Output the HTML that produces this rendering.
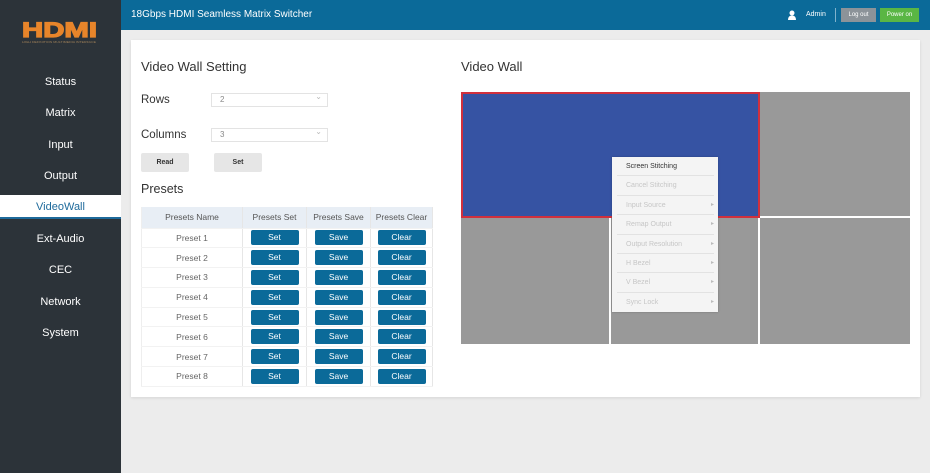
<!DOCTYPE html>
<html><head><meta charset="utf-8"><style>
*{margin:0;padding:0;box-sizing:border-box}
body{width:930px;height:473px;overflow:hidden;background:#ececec;font-family:"Liberation Sans",sans-serif;position:relative}
.abs{position:absolute}
#side{left:0;top:0;width:121px;height:473px;background:#2c3339}
.nav{position:absolute;left:0;width:121px;text-align:center;color:#fff;font-size:11px}
#hdr{left:121px;top:0;width:809px;height:30px;background:#0b6a99}
.card{left:131px;top:40px;width:789px;height:357px;background:#fff;box-shadow:0 1px 3px rgba(0,0,0,.1)}
.lbl{font-size:11.5px;color:#333}
.sel{width:117px;height:14px;border:1px solid #e3e3e3;font-size:8px;color:#888;padding:1px 8px;background:#fff}
.sel:after{content:"⌄";position:absolute;right:5px;top:-2px;color:#bbb;font-size:8px}
.gbtn{background:#e6e6e6;font-size:7px;font-weight:bold;color:#333;text-align:center;border-radius:2px}
table{border-collapse:collapse;font-size:8.5px;color:#666}
td,th{border-right:1px solid #e6e6e6;text-align:center;height:19.8px;padding:0;border-bottom:1px solid #f2f2f2}
th{background:#e8eef5;font-weight:normal;color:#555;height:21px}
.b{display:inline-block;width:48px;height:15px;line-height:15px;background:#0b6a99;color:#fff;border-radius:2px;font-size:8.5px;vertical-align:middle}
.mi{height:19.4px;line-height:19px;border-bottom:1px solid #e2e2e2;margin:0 4px 0 5px;padding-left:9px;font-size:7px;color:#c6c6c6;position:relative}
.mi.a:after{content:"▸";position:absolute;right:0;color:#bbb;font-size:6px}
</style></head><body>
<div id="side" class="abs">
 <svg class="abs" style="left:20px;top:18px" width="82" height="28" viewBox="0 0 82 28">
  <text x="2" y="19" textLength="75" lengthAdjust="spacingAndGlyphs" font-family="Liberation Sans" font-weight="bold" font-size="21" fill="#e8852a" stroke="#e8852a" stroke-width="1.2">HDMI</text>
  <text x="2" y="25" textLength="74" lengthAdjust="spacingAndGlyphs" font-family="Liberation Sans" font-size="3" fill="#a08058">HIGH DEFINITION MULTIMEDIA INTERFACE</text>
 </svg>
 <div class="nav" style="top:76px">Status</div>
 <div class="nav" style="top:107px">Matrix</div>
 <div class="nav" style="top:139px">Input</div>
 <div class="nav" style="top:170px">Output</div>
 <div class="nav" style="top:195px;height:24px;line-height:24px;background:#fff;color:#1e6a9b;border-bottom:2px solid #1e6a9b">VideoWall</div>
 <div class="nav" style="top:233px">Ext-Audio</div>
 <div class="nav" style="top:264px">CEC</div>
 <div class="nav" style="top:296px">Network</div>
 <div class="nav" style="top:327px">System</div>
</div>
<div id="hdr" class="abs">
 <div class="abs" style="left:10px;top:9px;color:#fff;font-size:10px">18Gbps HDMI Seamless Matrix Switcher</div>
 <svg class="abs" style="left:667px;top:10px" width="8" height="10" viewBox="0 0 8 10"><circle cx="4" cy="3" r="2.5" fill="#fff"/><path d="M0 10 Q0 5.5 4 5.5 Q8 5.5 8 10Z" fill="#fff"/></svg>
 <div class="abs" style="left:685px;top:11px;color:#fff;font-size:7px">Admin</div>
 <div class="abs" style="left:714px;top:8px;width:1px;height:14px;background:#7fb2cc"></div>
 <div class="abs" style="left:720px;top:8px;width:35px;height:14px;background:#8c9399;color:#fff;font-size:6px;text-align:center;line-height:14px">Log out</div>
 <div class="abs" style="left:759px;top:8px;width:39px;height:14px;background:#5ab644;color:#fff;font-size:6px;text-align:center;line-height:14px">Power on</div>
</div>
<div class="card abs">
 <div class="abs" style="left:10px;top:19px;font-size:13px;color:#333">Video Wall Setting</div>
 <div class="abs lbl" style="left:10px;top:54px">Rows</div>
 <div class="abs sel" style="left:80px;top:53px">2</div>
 <div class="abs lbl" style="left:10px;top:89px">Columns</div>
 <div class="abs sel" style="left:80px;top:88px">3</div>
 <div class="abs gbtn" style="left:10px;top:113px;width:48px;height:19px;line-height:19px">Read</div>
 <div class="abs gbtn" style="left:83px;top:113px;width:48px;height:19px;line-height:19px">Set</div>
 <div class="abs" style="left:10px;top:142px;font-size:12.5px;color:#333">Presets</div>
 <table class="abs" style="left:10px;top:167px;width:292px;border-left:1px solid #eee">
  <tr><th style="width:101px">Presets Name</th><th style="width:64px">Presets Set</th><th style="width:64px">Presets Save</th><th>Presets Clear</th></tr>
  <tr><td>Preset 1</td><td><span class="b">Set</span></td><td><span class="b">Save</span></td><td><span class="b">Clear</span></td></tr>
  <tr><td>Preset 2</td><td><span class="b">Set</span></td><td><span class="b">Save</span></td><td><span class="b">Clear</span></td></tr>
  <tr><td>Preset 3</td><td><span class="b">Set</span></td><td><span class="b">Save</span></td><td><span class="b">Clear</span></td></tr>
  <tr><td>Preset 4</td><td><span class="b">Set</span></td><td><span class="b">Save</span></td><td><span class="b">Clear</span></td></tr>
  <tr><td>Preset 5</td><td><span class="b">Set</span></td><td><span class="b">Save</span></td><td><span class="b">Clear</span></td></tr>
  <tr><td>Preset 6</td><td><span class="b">Set</span></td><td><span class="b">Save</span></td><td><span class="b">Clear</span></td></tr>
  <tr><td>Preset 7</td><td><span class="b">Set</span></td><td><span class="b">Save</span></td><td><span class="b">Clear</span></td></tr>
  <tr><td>Preset 8</td><td><span class="b">Set</span></td><td><span class="b">Save</span></td><td><span class="b">Clear</span></td></tr>
 </table>
 <div class="abs" style="left:330px;top:19px;font-size:13px;color:#333">Video Wall</div>
</div>
<div class="abs" style="left:461px;top:92px;width:449px;height:252px;background:#999"></div>
<div class="abs" style="left:609px;top:217px;width:2px;height:127px;background:#fff"></div>
<div class="abs" style="left:758px;top:92px;width:2px;height:252px;background:#fff"></div>
<div class="abs" style="left:461px;top:216px;width:449px;height:2px;background:#fff"></div>
<div class="abs" style="left:461px;top:92px;width:299px;height:126px;background:#3653a3;border:2px solid #d1303d"></div>
<div class="abs" style="left:612px;top:157px;width:106px;height:155px;background:#f4f4f4;box-shadow:0 0 2px rgba(0,0,0,.25)">
 <div class="mi" style="color:#333">Screen Stitching</div>
 <div class="mi">Cancel Stitching</div>
 <div class="mi a">Input Source</div>
 <div class="mi a">Remap Output</div>
 <div class="mi a">Output Resolution</div>
 <div class="mi a">H Bezel</div>
 <div class="mi a">V Bezel</div>
 <div class="mi a" style="border-bottom:none">Sync Lock</div>
</div>
</body></html>
